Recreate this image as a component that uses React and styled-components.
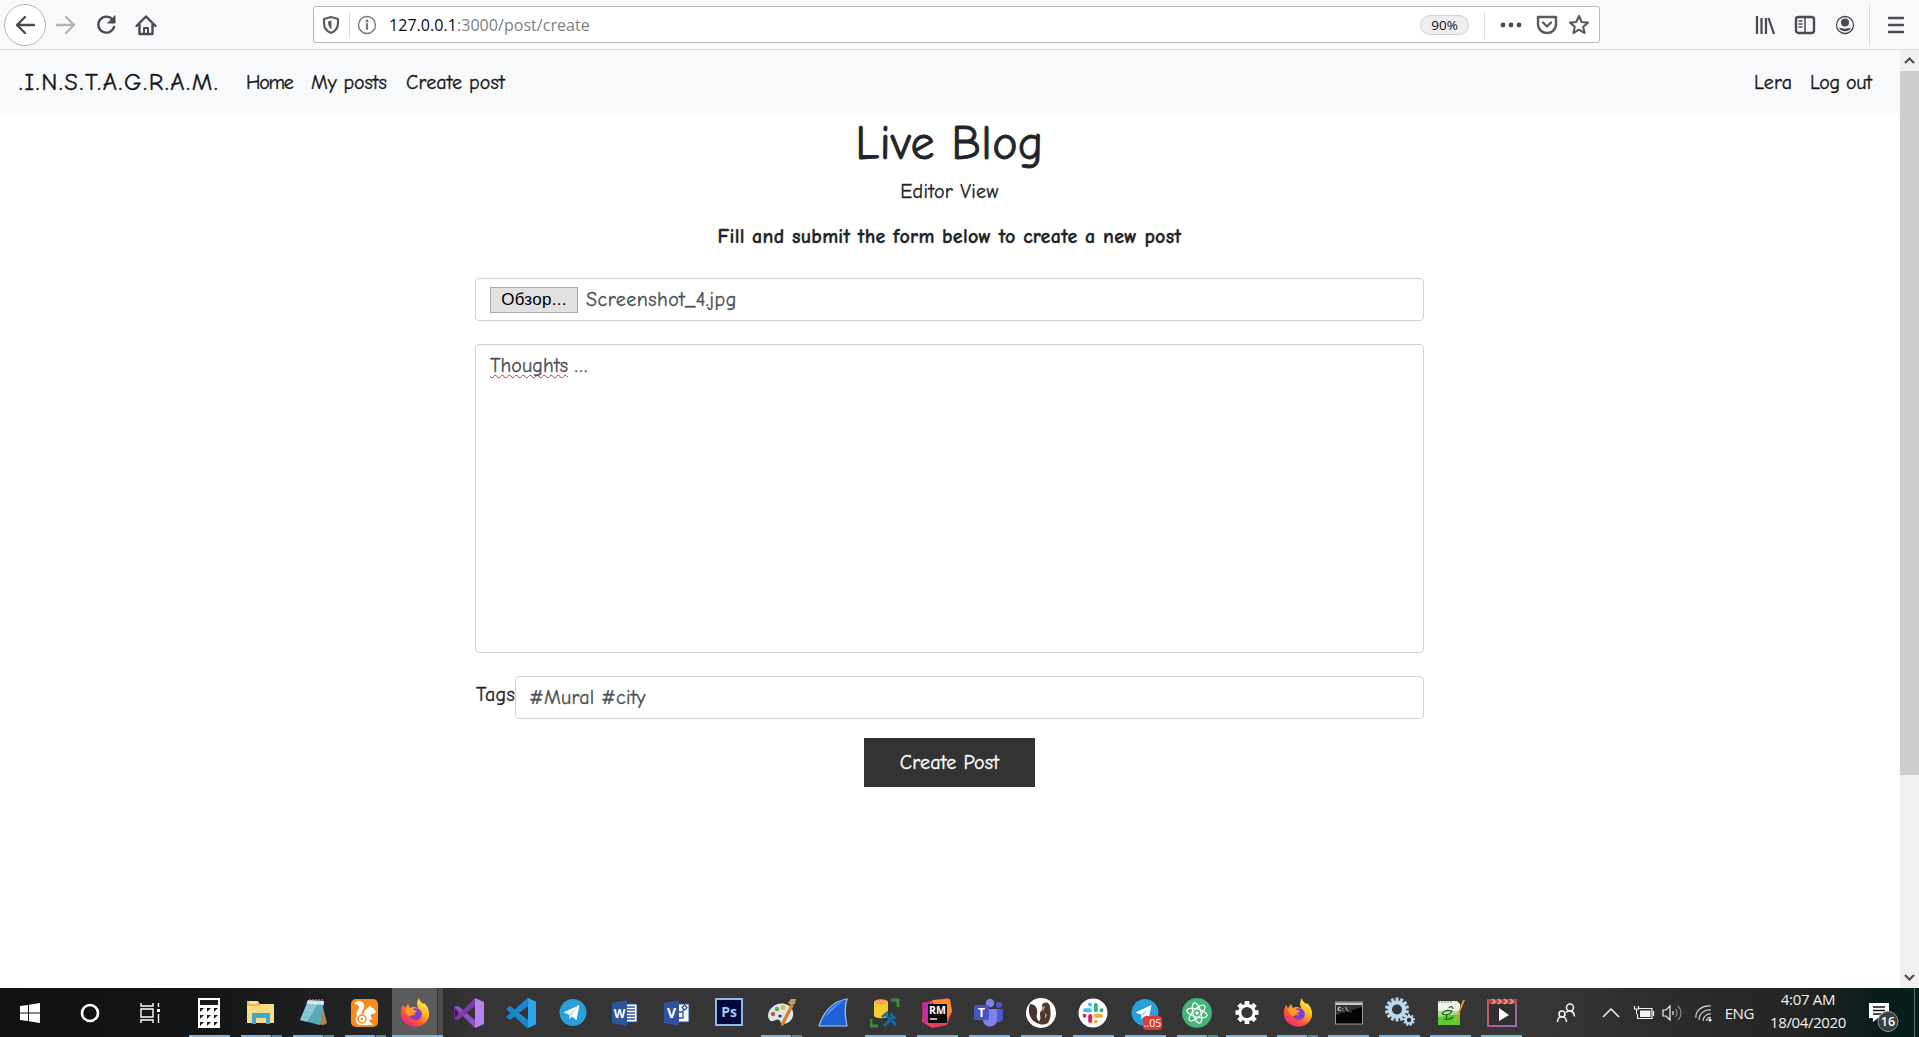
import React from "react";
import styled, { createGlobalStyle, css } from "styled-components";

const hand = `"Comic Sans MS", "Comic Neue", "Open Sans", "Noto Sans", cursive`;
const ui = `"Segoe UI", "Open Sans", "Noto Sans", sans-serif`;

const Global = createGlobalStyle`
  *, *::before, *::after { box-sizing: border-box; }
  body { margin: 0; background: #fff; overflow: hidden; }
  svg { display: block; flex: none; }
`;

const Screen = styled.div`
  width: 1919px;
  height: 1037px;
  display: flex;
  flex-direction: column;
  overflow: hidden;
`;

/* Browser toolbar */
const Toolbar = styled.header`
  height: 50px;
  flex: none;
  display: flex;
  align-items: center;
  background: #f9f9fb;
  border-bottom: 1px solid #dcdcdf;
  color: #4a4a4f;
`;
const BackButton = styled.div`
  width: 42px;
  height: 42px;
  margin-left: 4px;
  border-radius: 50%;
  border: 1px solid #b5b5b8;
  background: #fff;
  display: grid;
  place-items: center;
`;
const ToolButton = styled.div`
  width: ${(p) => p.$w || 40}px;
  height: 40px;
  display: grid;
  place-items: center;
  color: ${(p) => p.$color || "#4a4a4f"};
`;
const AddressBar = styled.div`
  width: 1287px;
  height: 37px;
  margin-left: 147px;
  border: 1px solid #b9b9bb;
  border-radius: 3px;
  background: #fff;
  display: flex;
  align-items: center;
  color: #5c5c60;
`;
const Divider = styled.i`
  width: 1px;
  height: ${(p) => p.$h}px;
  margin-left: ${(p) => p.$ml || 0}px;
  background: #dadadd;
`;
const Url = styled.div`
  flex: 1;
  padding: 1px 0 0 5px;
  font: 16px/24px ${ui};
  color: #808084;
`;
const Host = styled.b`
  font-weight: 400;
  color: #0c0c0d;
`;
const Zoom = styled.div`
  width: 49px;
  height: 20px;
  margin-right: 15px;
  border: 1px solid #cfcfd1;
  border-radius: 10px;
  background: #eeeef0;
  font: 13.5px/18px ${ui};
  color: #111;
  text-align: center;
`;
const Spacer = styled.div`
  flex: 1;
`;

/* Page */
const Viewport = styled.div`
  flex: 1;
  min-height: 0;
  display: flex;
`;
const Page = styled.div`
  width: 1900px;
  font-family: ${hand};
  font-size: 20px;
  color: #212529;
  -webkit-text-stroke: 0.35px currentColor;
`;
const Nav = styled.nav`
  height: 63px;
  display: flex;
  align-items: center;
  padding: 1px 28px 0 18px;
  background: #f8f9fa;
  color: #15171a;
`;
const Brand = styled.div`
  width: 228px;
  padding-left: 1px;
  font-size: 24.5px;
`;
const NavLink = styled.div`
  width: ${(p) => p.$w}px;
  white-space: nowrap;
`;
const Fit = styled.span`
  white-space: nowrap;
  letter-spacing: ${(p) => p.$ls || 0}px;
`;
const Main = styled.main`
  width: 949px;
  margin: 0 0 0 475px;
  display: flex;
  flex-direction: column;
  align-items: center;
`;
const Title = styled.h1`
  margin: 4px 0 0;
  font-weight: 400;
  font-size: 48px;
  line-height: 54px;
  -webkit-text-stroke-width: 0.8px;
`;
const Line = styled.p`
  margin: ${(p) => p.$mt}px 0 0;
  line-height: 26px;
  font-weight: ${(p) => (p.$bold ? 700 : 400)};
`;
const Field = styled.div`
  width: 100%;
  height: ${(p) => p.$h}px;
  margin-top: ${(p) => p.$mt || 0}px;
  padding: ${(p) => p.$pad || "0 14px"};
  display: flex;
  align-items: ${(p) => p.$align || "center"};
  border: 1px solid #ced2d6;
  border-radius: 4px;
  color: #495057;
`;
const Browse = styled.div`
  width: 88px;
  height: 26px;
  margin-right: 8px;
  border: 1px solid #adadad;
  background: #e1e1e1;
  color: #000;
  font: 17px/24px "Liberation Sans", Arial, sans-serif;
  text-align: center;
  -webkit-text-stroke-width: 0;
`;
const Misspelt = styled(Fit)`
  text-decoration: underline wavy #c8303a 1px;
  text-underline-offset: 2px;
  text-decoration-skip-ink: none;
`;
const TagRow = styled.div`
  width: 100%;
  height: 43px;
  margin-top: 23px;
  display: flex;
`;
const TagLabel = styled.label`
  width: 40px;
  flex: none;
  line-height: 37px;
  padding-left: 1px;
`;
const Submit = styled.button`
  width: 171px;
  height: 49px;
  margin-top: 19px;
  padding: 0;
  border: 0;
  background: #333;
  color: #fff;
  font: 20px/49px ${hand};
`;
const Scrollbar = styled.div`
  width: 19px;
  display: flex;
  flex-direction: column;
  justify-content: space-between;
  background: #f0f0f0;
`;
const Arrow = styled.div`
  height: 21px;
  display: grid;
  place-items: center;
`;
const Thumb = styled.div`
  height: 704px;
  margin-bottom: auto;
  background: #cdcdcd;
`;

/* Taskbar */
const Taskbar = styled.footer`
  height: 49px;
  flex: none;
  display: flex;
  color: #fff;
  background: linear-gradient(90deg, #101113 0, #141517 200px, #262727 400px, #353535 480px, #363636 1540px, #2b2a2a 1700px, #252525 1800px, #0a1c1c 1880px, #04201e 1919px);
`;
const SystemCell = styled.div`
  width: 60px;
  display: grid;
  place-items: center;
`;
const Apps = styled.div`
  display: flex;
  margin-left: ${(p) => p.$ml}px;
`;
const AppCell = styled.div`
  width: ${(p) => p.$w}px;
  display: grid;
  grid-template-rows: 47px 2px;
  justify-content: center;
  justify-items: center;
  align-items: center;
`;
const activeTile = css`
  width: 51px;
  border-right: 5px solid #4c4c4c;
  background: linear-gradient(90deg, #5c5c5c 45px, #353535 45px);
`;
const AppTile = styled.div`
  width: 41px;
  height: 47px;
  padding-top: 2px;
  display: grid;
  place-items: center;
  ${(p) => p.$active && activeTile}
`;
const marks = {
  none: "transparent",
  one: "#7db3dc",
  active: "#7db3dc",
  multi: "linear-gradient(90deg, #7db3dc 30px, #27445b 30px, #27445b 31px, #5c86a6 31px)",
};
const RunMark = styled.i`
  width: ${(p) => (p.$kind === "active" ? 51 : 41)}px;
  height: 2px;
  background: ${(p) => marks[p.$kind]};
`;
const Tray = styled.div`
  margin-left: auto;
  display: flex;
  align-items: center;
  font: 15px/24px ${ui};
  color: #f2f2f2;
`;
const TrayCell = styled.div`
  width: ${(p) => p.$w}px;
  display: grid;
  place-items: center;
  white-space: nowrap;
`;
const Language = styled.div`
  width: 45px;
  padding-right: 4px;
  text-align: right;
`;
const Clock = styled.div`
  width: 100px;
  padding-bottom: 3px;
  text-align: center;
  line-height: 23px;
`;
const Notices = styled.div`
  width: 56px;
  padding: 5px 0 0 7px;
`;
const DesktopEdge = styled.i`
  width: 5px;
  height: 49px;
  border-left: 1px solid #5c7170;
`;

const Svg = ({ s = 24, w, h, vb, children, ...r }) => (
  <svg width={w || s} height={h || s} viewBox={vb || `0 0 ${w || s} ${h || s}`} fill="none" {...r}>
    {children}
  </svg>
);
const line = { stroke: "currentColor", strokeWidth: 2.4, strokeLinecap: "round", strokeLinejoin: "round" };

const Firefox = ({ id }) => (
  <Svg s={30}>
    <defs>
      <linearGradient id={id} x1="24" y1="2" x2="6" y2="28" gradientUnits="userSpaceOnUse">
        <stop offset="0" stopColor="#fff04a" />
        <stop offset=".35" stopColor="#ffb52b" />
        <stop offset=".65" stopColor="#ff5a35" />
        <stop offset="1" stopColor="#e8218a" />
      </linearGradient>
    </defs>
    <path d="M19 0c0 2 1 3 3 5 1 1 2 1 2 0 7 6 6 15 2 19-5 6-15 6-21 1C0 21 0 12 3 7l2 3 3-4 2 4c3-2 6-1 9 1-3-4-2-8 0-11Z" fill={`url(#${id})`} />
    <path d="M11 12c3-3 8-2 10 1 2 4 0 8-4 9-4 0-7-2-7-5 2 1 4 1 6-1-2 0-4-1-5-4Z" fill="#7a3fd6" />
    <path d="M5 12c3-3 7-2 9 0l3 1c-1 2-4 2-5 4l-2 1c-3-1-5-3-5-6Z" fill="#ff9d2b" />
  </Svg>
);
const TelegramIcon = ({ badge }) => (
  <Svg s={30} overflow="visible">
    <circle cx="15" cy="14.500" r="13.500" fill="#2aa0d8" />
    <path d="m5.500 14.500 16-7.500-3 15-4.500-3.500-2.500 2.500-.5-4.500Z" fill="#fff" />
    <path d="m11 16.500 8-7-6 8-1.500 3Z" fill="#b9d5e6" />
    {badge && (
      <>
        <rect x="13" y="18" width="19" height="14" rx="3.500" fill="#e53935" />
        <text x="22.500" y="29" fontFamily={ui} fontSize="10.500" fill="#fff" textAnchor="middle">..05</text>
      </>
    )}
  </Svg>
);
const Cog = ({ cx, cy, r, teeth = 8, color, hole, tw }) => (
  <g>
    {Array.from({ length: teeth }, (_, i) => (
      <rect key={i} x={cx - tw / 2} y={cy - r} width={tw} height={r} fill={color} transform={`rotate(${(360 / teeth) * i} ${cx} ${cy})`} />
    ))}
    <circle cx={cx} cy={cy} r={r * 0.76} fill={color} />
    <circle cx={cx} cy={cy} r={hole} fill="#353535" />
  </g>
);
const OfficeIcon = ({ letter, blue, visio }) => (
  <Svg s={30}>
    <path d="M15 6h12v18H15Z" fill="#fff" stroke={blue} strokeWidth="1" />
    {visio ? (
      <path d="M17 14h4v6h-4M21 14v-2M22.500 7l2.500 2.500-2.500 2.500L20 9.500Z" stroke={blue} strokeWidth="1.300" />
    ) : (
      <path d="M17 9h8M17 12h8M17 15h8M17 18h8M17 21h8" stroke={blue} strokeWidth="1.400" />
    )}
    <path d="m2 5 15-3v26L2 25Z" fill={blue} />
    <text x="9.500" y="20" fontFamily="Open Sans, sans-serif" fontWeight="700" fontSize={visio ? 14 : 12} fill="#fff" textAnchor="middle">{letter}</text>
  </Svg>
);

const icons = {
  calc: (
    <Svg s={30}>
      <path d="M4 0h22v30H4Z" fill="#fff" />
      <path d="M6 2h18v5H6Z" fill="#1b1b1c" />
      {[10, 17, 24].map((y) => [6, 13, 20].map((x) => <path key={`${x}${y}`} d={`M${x} ${y}h4L${x} ${y + 4}Z`} fill="#1b1b1c" />))}
    </Svg>
  ),
  folder: (
    <Svg s={30}>
      <path d="M1 3h11l2 3h14v19H1Z" fill="#f1bd43" />
      <path d="M1 8h12l2-2h13v19H1Z" fill="#fbdc86" />
      <path d="M3 3.500h8v2H3Z" fill="#fff2c6" />
      <path d="M6 26V15h18v11h-4v-6H10v6Z" fill="#3ba9d6" />
    </Svg>
  ),
  notepad: (
    <Svg s={30}>
      <path d="m24 5 5 20-3 2-8-1Z" fill="#a98658" />
      <path d="M10 3 26 4l-4 23L2 22Z" fill="#58a9bd" />
      <path d="m10 3 11 1L9 24l-7-2Z" fill="#a9dbe6" opacity=".6" />
      <path d="m10 2 16 1-.5 4L8.500 5.500Z" fill="#dfe9eb" />
      <path d="M12 1v3m3-3v3m3-3v3m3-3v3m3-3v3" stroke="#b0b8ba" />
    </Svg>
  ),
  uc: (
    <Svg s={30}>
      <rect x="1" y="1" width="27" height="28" rx="5" fill="#f98a1c" />
      <path d="M4 6c2-4 9-4 10 1 1 4-3 6-2 9l1 1c1-4 3-6 6-8l1-2 1 2c3 1 4 3 5 5-1 2-3 2-5 2-1 2 1 3 1 5l-3 1c0 2 3 3 4 5H9c-4-2-4-7-2-9-2-4 3-7 2-9-1-3-3-3-5-3Z" fill="#fff" />
      <circle cx="12" cy="21" r="4" stroke="#f98a1c" strokeWidth="1.500" />
      <circle cx="12" cy="21" r="1.200" fill="#f98a1c" />
    </Svg>
  ),
  firefox: <Firefox id="fxA" />,
  vs: (
    <Svg s={30}>
      <path d="M0 9v12l4 1 9-7L4 8Z" fill="#6b2d96" />
      <path d="M4 13.500v3L1 19V11Z" fill="#2b2b2b" />
      <path d="M4 8 0 9l21 21v-8Z" fill="#9450c8" />
      <path d="M21 0v8L4 22l-4-1Z" fill="#7a3bab" />
      <path d="m21 0 9 4v22l-9 4Z" fill="#b583f0" />
    </Svg>
  ),
  vscode: (
    <Svg s={30}>
      <path d="M22 0v8L4 22l-4-3L21 .5Z" fill="#1b86cf" />
      <path d="M0 11 4 8l18 14v8h-1Z" fill="#1589cc" />
      <path d="m22 0 8 3.500v23L22 30Z" fill="#2fa4ea" />
    </Svg>
  ),
  telegram: <TelegramIcon />,
  word: <OfficeIcon letter="W" blue="#2b579a" />,
  visio: <OfficeIcon letter="V" blue="#32509f" visio />,
  ps: (
    <Svg s={30}>
      <rect x="2" y="1" width="26" height="26" fill="#06073d" stroke="#8fb9e6" strokeWidth="2" />
      <text x="15" y="19" fontFamily="Open Sans, sans-serif" fontWeight="700" fontSize="14" fill="#a5c9ef" textAnchor="middle">Ps</text>
    </Svg>
  ),
  paint: (
    <Svg s={30}>
      <path d="M2 17C3 9 12 4 19 6c6 1 9 6 8 12-1 5-6 8-10 8-3 0-2-3-4-4-2-2-5 2-8 1-2-1-3-3-3-6Z" fill="#dce8ef" />
      <circle cx="7" cy="16" r="2.200" fill="#e14b3e" />
      <circle cx="11" cy="11" r="2.200" fill="#57ad3c" />
      <circle cx="17" cy="9.500" r="2.400" fill="#edb72c" />
      <circle cx="14" cy="18" r="1.600" fill="#353535" />
      <path d="m25 6 3 1-10 20-3 1 0-3Z" fill="#d9812c" />
      <path d="m25 7-3-2 3-4h5l-1 5Z" fill="#c29a70" />
    </Svg>
  ),
  shark: (
    <Svg s={30}>
      <path d="M1 28C5 15 14 3 29 1c-3 8-2 17 0 27Z" fill="#1d62d8" stroke="#a7c6ee" strokeWidth="1.200" />
      <path d="M7 20C11 11 18 5 26 3 16 9 12 15 7 20Z" fill="#5b96f2" />
    </Svg>
  ),
  db: (
    <Svg s={30}>
      <path d="M4 4v14c2 3 12 3 14 0V4Z" fill="#f4cf2f" />
      <ellipse cx="11" cy="4" rx="7" ry="2.800" fill="#f8a94f" />
      <path d="M21 2h7v7M1 21v7h7" stroke="#3a8b3d" strokeWidth="3" />
      <path d="m15 16 11 11m-2-9L14 28" stroke="#176da8" strokeWidth="2.600" />
      <path d="m12 19 6-5M21 15l1 4 4 1" stroke="#176da8" strokeWidth="2.600" />
    </Svg>
  ),
  rm: (
    <Svg s={30}>
      <path d="m1 5 12-3 13-2 4 14-5 13-15 3L0 24Z" fill="#f13b62" />
      <path d="M10 2 28 1l2 12-8 13Z" fill="#ff8a2f" />
      <path d="m0 5 8-1v18l-6 4Z" fill="#c52ba4" />
      <rect x="6" y="6" width="19" height="19" fill="#0a0a0a" />
      <text x="15.500" y="16" fontFamily="Open Sans, sans-serif" fontWeight="700" fontSize="10.500" fill="#fff" textAnchor="middle">RM</text>
      <path d="M8 21h7" stroke="#fff" strokeWidth="1.400" />
    </Svg>
  ),
  teams: (
    <Svg s={30}>
      <circle cx="25" cy="7" r="3" fill="#5059c9" />
      <circle cx="16" cy="5" r="4.300" fill="#7b83eb" />
      <path d="M20 11h9v9c0 3-3 5-7 4Z" fill="#5059c9" />
      <path d="M9 11h14v11c0 8-12 9-14 1Z" fill="#7b83eb" />
      <rect x="0" y="7" width="15" height="15" rx="1" fill="#4b53bc" />
      <text x="7.500" y="19" fontFamily="Open Sans, sans-serif" fontWeight="700" fontSize="12" fill="#fff" textAnchor="middle">T</text>
    </Svg>
  ),
  dbeaver: (
    <Svg s={30}>
      <circle cx="15" cy="15" r="15" fill="#fff" />
      <path d="M4 6c5 0 8 4 7 10-1 3 0 6 3 8-1 1-2 2-3 1-7-3-10-11-7-19Z" fill="#45342e" />
      <path d="M16 7c2-4 8-3 8 2 1 6 1 11-2 16-4 2-8 2-10 0 2-2 3-5 2-8s2-4 2-6Z" fill="#50382f" />
      <path d="m16 9 3-1-2 6Zm3 6 2 2-2 4Z" fill="#c7a48e" />
    </Svg>
  ),
  slack: (
    <Svg s={30}>
      <circle cx="15" cy="15" r="14.500" fill="#fff" />
      <g strokeWidth="4" strokeLinecap="round">
        <path d="M12 6.500h.01M7 12.300h5" stroke="#36c5f0" />
        <path d="M17.800 7v5.300M23.500 12.300h.01" stroke="#2eb67d" />
        <path d="M18 17.800h5M17.800 23.500h.01" stroke="#ecb22e" />
        <path d="M12.200 18v5M6.500 17.800h.01" stroke="#e01e5a" />
      </g>
    </Svg>
  ),
  telegramBadge: <TelegramIcon badge />,
  atom: (
    <Svg s={30}>
      <circle cx="15" cy="15" r="15" fill="#46b47b" />
      <g stroke="#fff" strokeWidth="1.200">
        <ellipse cx="15" cy="15" rx="4" ry="10.500" transform="rotate(-15 15 15)" />
        <ellipse cx="15" cy="15" rx="4" ry="10.500" transform="rotate(45 15 15)" />
        <ellipse cx="15" cy="15" rx="4" ry="10.500" transform="rotate(105 15 15)" />
      </g>
      <circle cx="15" cy="15" r="1.800" fill="#fff" />
    </Svg>
  ),
  settings: (
    <Svg s={30}>
      <Cog cx={15} cy={14.5} r={11.5} teeth={8} tw={4.6} color="#fff" hole={5.6} />
    </Svg>
  ),
  firefox2: <Firefox id="fxB" />,
  cmd: (
    <Svg s={30}>
      <rect x="1.500" y="4" width="27" height="22" fill="#050505" stroke="#9b9b9b" />
      <path d="M2 4.500h26v2.500H2Z" fill="#c6c6c6" />
      <path d="M2 17 28 9V7H2Z" fill="#333" />
      <text x="3.500" y="13" fontFamily="Liberation Mono, monospace" fontWeight="700" fontSize="6" fill="#eee">C:\_</text>
    </Svg>
  ),
  gears: (
    <Svg s={30} overflow="visible">
      <Cog cx={12} cy={11.5} r={12} teeth={14} tw={3} color="#bcd7ec" hole={5} />
      <Cog cx={24} cy={22} r={6} teeth={9} tw={2} color="#bcd7ec" hole={2.2} />
    </Svg>
  ),
  npp: (
    <Svg s={30} overflow="visible">
      <path d="M2 3h19l3 3v21H2Z" fill="#eef4ea" />
      <path d="m2 17 22-3v13H2Z" fill="#5cc935" />
      <path d="M2 13h22v3L2 19Z" fill="#a5e08c" />
      <path d="M3 3v2m3-2v2m3-2v2m3-2v2m3-2v2" stroke="#777" />
      <path d="M6 16c2-4 6-4 10-3-2 4-6 5-10 3m7-6c1-2 4-2 4 1M8 21c3 1 7 0 9-2m-6-3-1 6" stroke="#1d5c1c" strokeWidth="1.200" />
      <path d="m29 2-8 19-2 4 0-4 8-19Z" fill="#e5a02b" />
    </Svg>
  ),
  player: (
    <Svg s={30}>
      <defs>
        <linearGradient id="pl" x1="0" y1="0" x2="1" y2="1">
          <stop offset="0" stopColor="#e05a4a" />
          <stop offset="1" stopColor="#a070c0" />
        </linearGradient>
      </defs>
      <rect x="1" y="2" width="28" height="26" fill="#303033" stroke="url(#pl)" strokeWidth="1.800" />
      <path d="M1 1h29v5H1Z" fill="#b34a48" />
      <path d="m5 1 3 2.500L5 6m6-5 3 2.500L11 6m6-5 3 2.500L17 6m6-5 3 2.500L23 6" stroke="#f0a090" strokeWidth="1.500" />
      <path d="m12 10 10 7-10 6Z" fill="#fff" />
    </Svg>
  ),
};

const pinned = [
  ["calc", "one"], ["folder", "multi"], ["notepad", "multi"], ["uc", "multi"], ["firefox", "active"],
  ["vs", "none"], ["vscode", "none"], ["telegram", "none"], ["word", "none"], ["visio", "none"],
  ["ps", "none"], ["paint", "multi"], ["shark", "none"], ["db", "one"], ["rm", "one"],
  ["teams", "one"], ["dbeaver", "one"], ["slack", "one"], ["telegramBadge", "one"], ["atom", "multi"],
];
const running = [
  ["settings", "one"], ["firefox2", "multi"], ["cmd", "one"], ["gears", "one"], ["npp", "one"], ["player", "one"],
];

const AppGroup = ({ items, cell, ml }) => (
  <Apps $ml={ml}>
    {items.map(([name, kind]) => (
      <AppCell key={name} $w={cell}>
        <AppTile $active={kind === "active"}>{icons[name]}</AppTile>
        <RunMark $kind={kind} />
      </AppCell>
    ))}
  </Apps>
);

export default function App() {
  return (
    <Screen>
      <Global />
      <Toolbar>
        <BackButton>
          <Svg s={24} {...line}><path d="M21 12H4m8-8-8 8 8 8" /></Svg>
        </BackButton>
        <ToolButton $color="#b4b4b7">
          <Svg s={24} {...line}><path d="M3 12h17m-8-8 8 8-8 8" /></Svg>
        </ToolButton>
        <ToolButton>
          <Svg s={22} {...line}><path d="M17.500 5.500A8 8 0 1 0 19 13" /><path d="M20 2v7h-7Z" fill="currentColor" strokeWidth="1" /></Svg>
        </ToolButton>
        <ToolButton>
          <Svg s={22} {...line}><path d="m1.500 12 9.500-9.500 9.500 9.500M4.500 10.500V20h13v-9.500" /><path d="M9 20v-6h4v6" strokeWidth="2" /></Svg>
        </ToolButton>
        <AddressBar>
          <ToolButton $w={34} $color="#5c5c60">
            <Svg s={20} {...line} strokeWidth="2.200"><path d="M10 2 3 4v4c0 5 2 8 7 10 5-2 7-5 7-10V4Z" /><path d="M10.500 5.500v9C8 13 7 10 7 6.500Z" fill="currentColor" stroke="none" /></Svg>
          </ToolButton>
          <Divider $h={26} $ml={1} />
          <ToolButton $w={34} $color="#77777b">
            <Svg s={20} {...line} strokeWidth="1.400"><circle cx="10" cy="10" r="8.500" /><path d="M10 9v5" strokeWidth="2.200" /><circle cx="10" cy="6" r=".7" fill="currentColor" /></Svg>
          </ToolButton>
          <Url><Fit $ls={0.05}><Host>127.0.0.1</Host>:3000/post/create</Fit></Url>
          <Zoom>90%</Zoom>
          <Divider $h={26} />
          <ToolButton $w={51}>
            <Svg w={22} h={6}><circle cx="3" cy="3" r="2.400" fill="currentColor" /><circle cx="11" cy="3" r="2.400" fill="currentColor" /><circle cx="19" cy="3" r="2.400" fill="currentColor" /></Svg>
          </ToolButton>
          <ToolButton $w={20} $color="#5c5c60">
            <Svg s={22} {...line}><path d="M2 3h18v7c0 12-18 12-18 0Z" /><path d="m7 8.500 4 4 4-4" /></Svg>
          </ToolButton>
          <ToolButton $w={43} $color="#5c5c60">
            <Svg w={24} h={22} {...line} strokeWidth="2.100"><path d="m13 2 2.700 6 6.300.6-4.800 4.200 1.400 6.200-5.600-3.300L7.400 19l1.400-6.200L4 8.600l6.300-.6Z" /></Svg>
          </ToolButton>
        </AddressBar>
        <Spacer />
        <ToolButton>
          <Svg s={20} stroke="currentColor" strokeWidth="2.200"><path d="M2 1v18M6.500 3v16M11 3v16M13.500 3 19 19" /></Svg>
        </ToolButton>
        <ToolButton>
          <Svg s={22} {...line}><rect x="2" y="3" width="18" height="16" rx="2.500" /><path d="M11 3v16" strokeWidth="1.500" /><path d="M5 7h3M5 10h3M5 13h3" strokeWidth="1.400" /></Svg>
        </ToolButton>
        <ToolButton>
          <Svg s={20}><circle cx="10" cy="10" r="8.500" stroke="currentColor" strokeWidth="1.300" /><circle cx="10" cy="7.500" r="4" fill="currentColor" /><path d="M4 12.500c3 1.500 9 1.500 12 0-1 5-11 5-12 0Z" fill="currentColor" /></Svg>
        </ToolButton>
        <Divider $h={42} $ml={4} />
        <ToolButton $w={49}>
          <Svg w={20} h={18} {...line}><path d="M4 2h14M4 9h14M4 16h14" /></Svg>
        </ToolButton>
      </Toolbar>
      <Viewport>
        <Page>
          <Nav>
            <Brand><Fit $ls={1.68}>.I.N.S.T.A.G.R.A.M.</Fit></Brand>
            <NavLink $w={65}><Fit $ls={-1.3}>Home</Fit></NavLink>
            <NavLink $w={95}><Fit>My posts</Fit></NavLink>
            <NavLink $w={99}><Fit $ls={0.15}>Create post</Fit></NavLink>
            <Spacer />
            <NavLink $w={56}><Fit $ls={0.2}>Lera</Fit></NavLink>
            <NavLink $w={62}><Fit $ls={-0.35}>Log out</Fit></NavLink>
          </Nav>
          <Main>
            <Title><Fit $ls={0.35}>Live Blog</Fit></Title>
            <Line $mt={8}><Fit $ls={0.35}>Editor View</Fit></Line>
            <Line $mt={19} $bold><Fit $ls={0.3}>Fill and submit the form below to create a new post</Fit></Line>
            <Field $mt={28} $h={43}>
              <Browse><Fit $ls={0.3}>Обзор...</Fit></Browse>
              <Fit $ls={0.48}>Screenshot_4.jpg</Fit>
            </Field>
            <Field $mt={23} $h={309} $pad="9px 14px" $align="flex-start">
              <Misspelt $ls={0.1}>Thoughts</Misspelt>&nbsp;<Fit $ls={1.6}>...</Fit>
            </Field>
            <TagRow>
              <TagLabel><Fit $ls={0.3}>Tags</Fit></TagLabel>
              <Field $h={43} $pad="0 13px"><Fit $ls={0.2}>#Mural #city</Fit></Field>
            </TagRow>
            <Submit><Fit $ls={0.25}>Create Post</Fit></Submit>
          </Main>
        </Page>
        <Scrollbar>
          <Arrow><Svg w={11} h={7} stroke="#505050" strokeWidth="2.200"><path d="m1 6 4.500-4.500L10 6" /></Svg></Arrow>
          <Thumb />
          <Arrow><Svg w={11} h={7} stroke="#505050" strokeWidth="2.200"><path d="m1 1 4.500 4.500L10 1" /></Svg></Arrow>
        </Scrollbar>
      </Viewport>
      <Taskbar>
        <SystemCell><Svg s={20}><path d="m0 3 8-1v7.500H0Zm9-1.200L20 0v9.500H9ZM0 10.500h8V18l-8-1Zm9 0h11V20L9 18.200Z" fill="#fff" /></Svg></SystemCell>
        <SystemCell><Svg s={20}><circle cx="10" cy="10" r="8" stroke="#fff" strokeWidth="2.600" /></Svg></SystemCell>
        <SystemCell><Svg s={20} stroke="#fff" strokeWidth="1.400"><path d="M1 0v3h12V0M1 6h12v8H1ZM1 20v-3h12v3M18.500 0v4M18.500 11v9" /><path d="M17 6h3v3h-3Z" fill="#fff" stroke="none" /></Svg></SystemCell>
        <AppGroup items={pinned} cell={52} ml={3} />
        <AppGroup items={running} cell={51} ml={-2} />
        <Tray>
          <TrayCell $w={46}>
            <Svg s={20} stroke="#f2f2f2" strokeWidth="1.600"><circle cx="14" cy="4.500" r="3.500" /><circle cx="6" cy="11" r="3" /><path d="M1.500 19c0-7 9-7 9 0M10 9.500c3-3 8-2 8.500 4" /></Svg>
          </TrayCell>
          <TrayCell $w={44}><Svg w={18} h={10} stroke="#f2f2f2" strokeWidth="1.500"><path d="m1 9 8-8 8 8" /></Svg></TrayCell>
          <TrayCell $w={18}>
            <Svg w={22} h={16} stroke="#f2f2f2" strokeWidth="1.200"><path d="M6 3.500h13v10H4.500V9" /><path d="M7 5.500h10.500v6.500H7Z" fill="#f2f2f2" stroke="none" /><path d="M20.500 6v5M1.500 1v3h4V1M3.500 4v5" /></Svg>
          </TrayCell>
          <TrayCell $w={42}>
            <Svg s={20} stroke="#f2f2f2" strokeWidth="1.200"><path d="M1 7h3l4-4v14l-4-4H1Z" /><path d="M11 8v4" /><path d="M13.500 6c2 2 2 6 0 8M16 3c4 4 4 10 0 14" stroke="#8b8b8b" /></Svg>
          </TrayCell>
          <TrayCell $w={20}>
            <Svg s={18} stroke="#d0d0d0" strokeWidth="1.200"><path d="M2 14C1 7 8 1 17 2M5 16C5 10 10 5 17 6M9 17c0-4 4-8 8-7M12.500 17c0-2 2-4 4.500-3.500" /><circle cx="16" cy="16" r="1.600" fill="#fff" stroke="none" /></Svg>
          </TrayCell>
          <Language><Fit $ls={-0.4}>ENG</Fit></Language>
          <Clock><Fit $ls={-0.3}>4:07 AM</Fit><br /><Fit $ls={-0.36}>18/04/2020</Fit></Clock>
          <Notices>
            <Svg w={34} h={34}>
              <path d="M4 5h20v15H13l-5 4v-4H4Z" fill="#fff" />
              <path d="M8 9h12M8 12.500h12M8 16h8" stroke="#151515" strokeWidth="1.300" />
              <circle cx="23" cy="23.500" r="10" fill="#3a4141" stroke="#8f9696" />
              <text x="23" y="28" fontFamily={ui} fontWeight="600" fontSize="12.500" fill="#fff" textAnchor="middle">16</text>
            </Svg>
          </Notices>
          <DesktopEdge />
        </Tray>
      </Taskbar>
    </Screen>
  );
}
